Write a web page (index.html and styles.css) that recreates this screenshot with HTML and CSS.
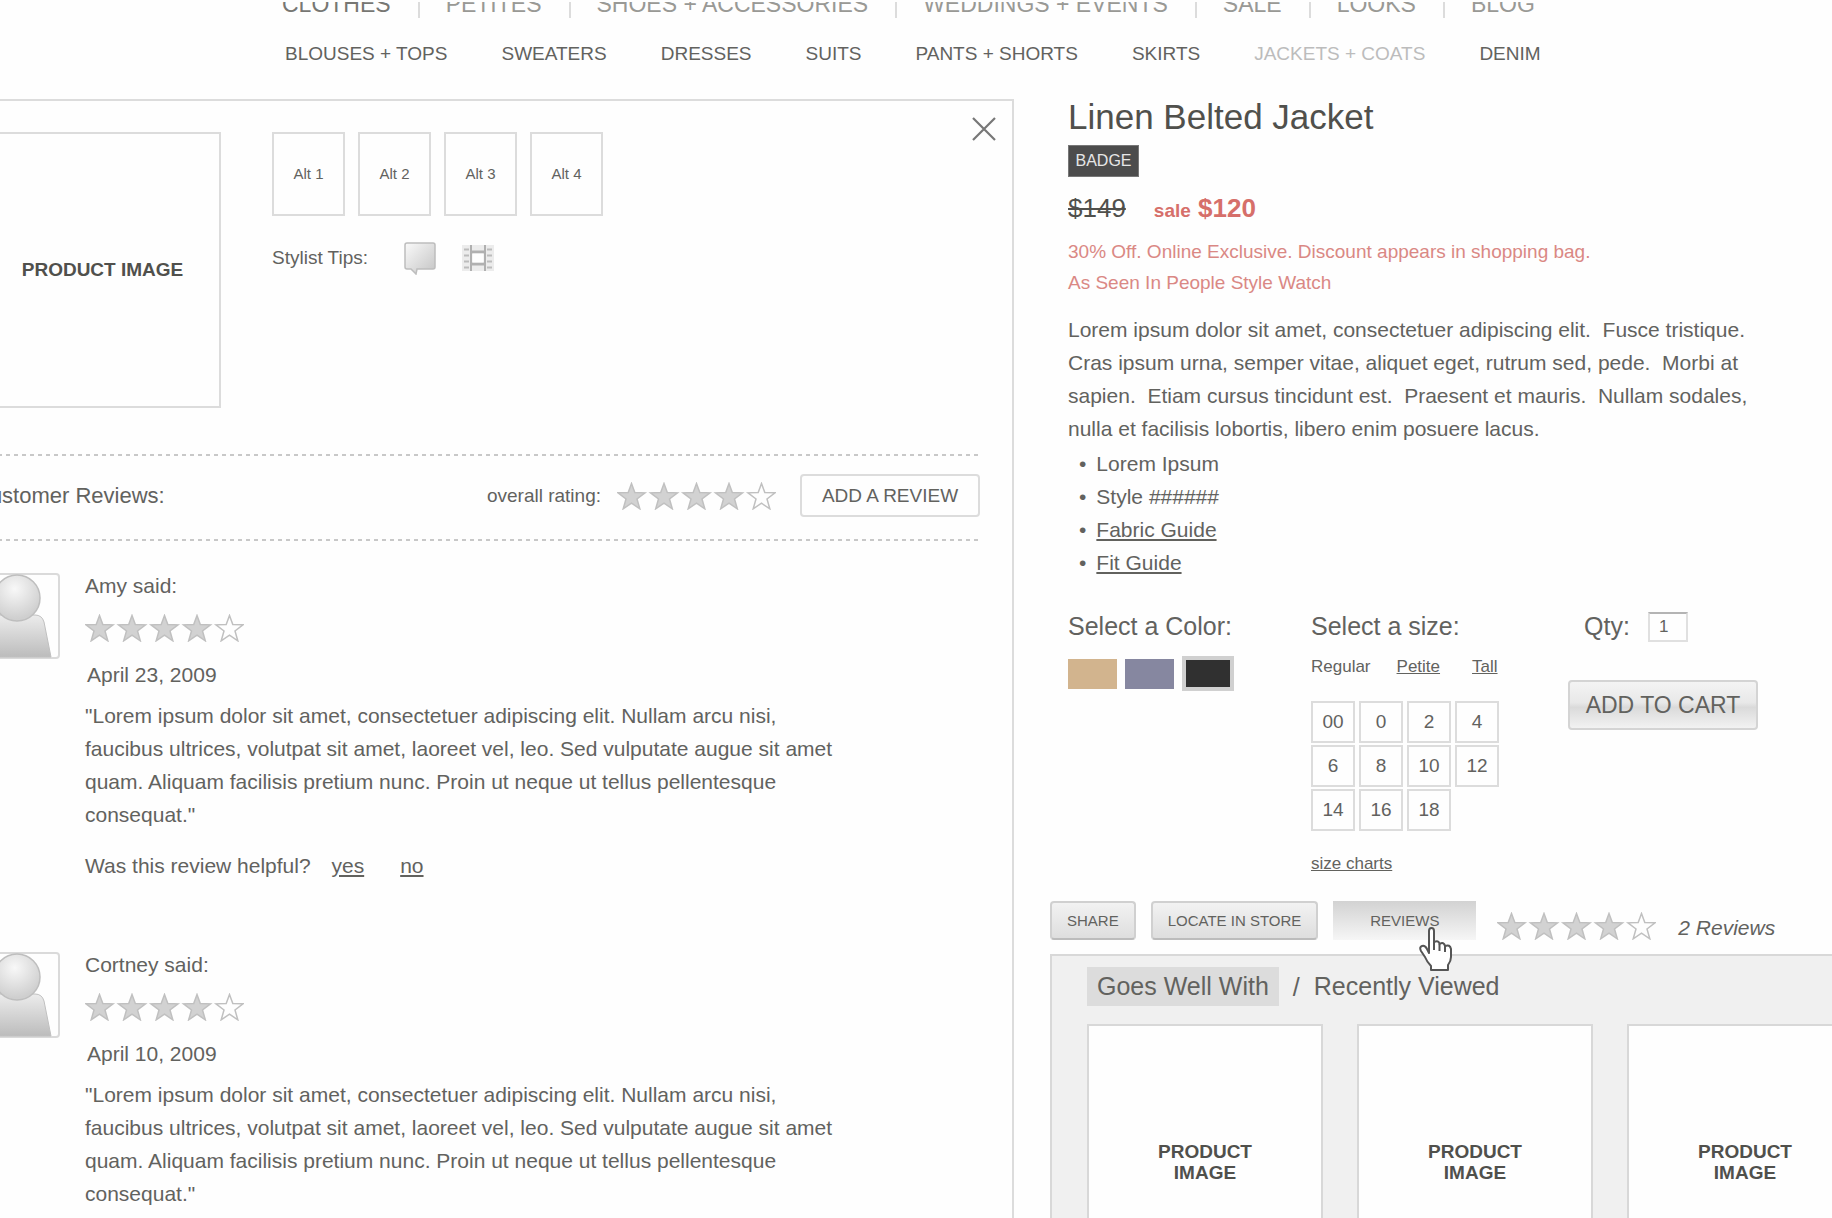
FILE: index.html
```html
<!DOCTYPE html>
<html lang="en">
<head>
    <meta charset="UTF-8">
    <meta name="viewport" content="width=device-width, initial-scale=1.0">
    <title>Linen Belted Jacket</title>
    <link rel="stylesheet" href="styles.css">
</head>
<body>
    <!-- shared icons -->
    <svg class="defs" width="0" height="0" aria-hidden="true">
        <defs>
            <linearGradient id="gBody" x1="0" y1="0" x2="0" y2="1">
                <stop offset="0" stop-color="#ececec"/>
                <stop offset="1" stop-color="#bcbcbc"/>
            </linearGradient>
            <radialGradient id="gHead" cx="0.45" cy="0.3" r="0.65">
                <stop offset="0" stop-color="#f8f8f8"/>
                <stop offset="1" stop-color="#cfcfcf"/>
            </radialGradient>
            <linearGradient id="gBubble" x1="0" y1="0" x2="1" y2="1">
                <stop offset="0" stop-color="#fafafa"/>
                <stop offset="1" stop-color="#c4c4c4"/>
            </linearGradient>
            <path id="star" d="M14.5 1.5L17.8 10.4L28 10.8L20 17L22.8 26.8L14.5 21.2L6.2 26.8L9 17L1 10.8L11.2 10.4Z"/>
            <symbol id="stars" viewBox="0 0 159 28">
                <g fill="#d2d2d2" stroke="#c0c0c0" stroke-width="1.5">
                    <use href="#star"/>
                    <use href="#star" x="32.5"/>
                    <use href="#star" x="65"/>
                    <use href="#star" x="97.5"/>
                    <use href="#star" x="130" fill="#fefefe"/>
                </g>
            </symbol>
            <symbol id="avatar" viewBox="0 0 86 86">
                <rect x="1" y="1" width="84" height="84" rx="3" fill="#fefefe" stroke="#dadada" stroke-width="2"/>
                <path d="M9 84L16 49Q18 42 25 42H61Q68 42 70 49L77 84Z" fill="url(#gBody)" stroke="#c0c0c0"/>
                <circle cx="43" cy="25" r="23" fill="url(#gHead)" stroke="#bebebe" stroke-width="1.5"/>
            </symbol>
        </defs>
    </svg>

    <div class="header">
        <ul class="nav">
            <li class="active"><a href="#">CLOTHES</a></li>
            <li><a href="#">PETITES</a></li>
            <li><a href="#">SHOES + ACCESSORIES</a></li>
            <li><a href="#">WEDDINGS + EVENTS</a></li>
            <li><a href="#">SALE</a></li>
            <li><a href="#">LOOKS</a></li>
            <li><a href="#">BLOG</a></li>
        </ul>
        <ul class="subNav">
            <li><a href="#">BLOUSES + TOPS</a></li>
            <li><a href="#">SWEATERS</a></li>
            <li><a href="#">DRESSES</a></li>
            <li><a href="#">SUITS</a></li>
            <li><a href="#">PANTS + SHORTS</a></li>
            <li><a href="#">SKIRTS</a></li>
            <li class="current"><a href="#">JACKETS + COATS</a></li>
            <li><a href="#">DENIM</a></li>
        </ul>
    </div>

    <div class="main">
        <div class="panel">
            <button class="close" aria-label="Close">
                <svg width="26" height="26" viewBox="0 0 26 26" fill="none" stroke="#777" stroke-width="2.2"><path d="M2 2L24 24M24 2L2 24"/></svg>
            </button>
            <div class="media">
                <div class="mainImage">PRODUCT IMAGE</div>
                <div class="mediaSide">
                    <div class="alts">
                        <button class="alt">Alt 1</button>
                        <button class="alt">Alt 2</button>
                        <button class="alt">Alt 3</button>
                        <button class="alt">Alt 4</button>
                    </div>
                    <div class="tips">
                        <span>Stylist Tips:</span>
                        <svg width="34" height="34" viewBox="0 0 34 34">
                            <path d="M4 2H30Q32 2 32 4V26Q32 28 30 28H14L13 33L8 28H4Q2 28 2 26V4Q2 2 4 2Z" fill="url(#gBubble)" stroke="#bdbdbd" stroke-width="1.5"/>
                        </svg>
                        <svg width="32" height="26" viewBox="0 0 32 26">
                            <rect width="32" height="26" fill="#ececec"/>
                            <path d="M9 0V26M23 0V26" stroke="#b0b0b0" stroke-width="2"/>
                            <path d="M9 7H23M9 19H23" stroke="#b0b0b0" stroke-width="3"/>
                            <rect x="10.5" y="8.5" width="11" height="9" fill="#fefefe"/>
                            <path d="M2 4.5H7M2 10.5H7M2 16.5H7M2 22.5H7M25 4.5H30M25 10.5H30M25 16.5H30M25 22.5H30" stroke="#bcbcbc" stroke-width="2"/>
                        </svg>
                    </div>
                </div>
            </div>

            <div class="reviewsHead">
                <h2>Customer Reviews:</h2>
                <span class="overall">overall rating:</span>
                <svg class="stars" role="img" aria-label="4 of 5 stars"><use href="#stars"/></svg>
                <button class="addReview">ADD A REVIEW</button>
            </div>

            <div class="review">
                <svg class="avatar"><use href="#avatar"/></svg>
                <div class="reviewBody">
                    <div class="author">Amy said:</div>
                    <svg class="stars" role="img" aria-label="4 of 5 stars"><use href="#stars"/></svg>
                    <div class="date">April 23, 2009</div>
                    <p>"Lorem ipsum dolor sit amet, consectetuer adipiscing elit. Nullam arcu nisi, faucibus ultrices, volutpat sit amet, laoreet vel, leo. Sed vulputate augue sit amet quam. Aliquam facilisis pretium nunc. Proin ut neque ut tellus pellentesque consequat."</p>
                    <div class="helpful">Was this review helpful? <a href="#">yes</a><a href="#">no</a></div>
                </div>
            </div>
            <div class="review">
                <svg class="avatar"><use href="#avatar"/></svg>
                <div class="reviewBody">
                    <div class="author">Cortney said:</div>
                    <svg class="stars" role="img" aria-label="4 of 5 stars"><use href="#stars"/></svg>
                    <div class="date">April 10, 2009</div>
                    <p>"Lorem ipsum dolor sit amet, consectetuer adipiscing elit. Nullam arcu nisi, faucibus ultrices, volutpat sit amet, laoreet vel, leo. Sed vulputate augue sit amet quam. Aliquam facilisis pretium nunc. Proin ut neque ut tellus pellentesque consequat."</p>
                </div>
            </div>
        </div>

        <div class="side">
            <div class="info">
                <h1>Linen Belted Jacket</h1>
                <span class="badge">BADGE</span>
                <div class="price"><del>$149</del><span class="sale">sale</span> <strong>$120</strong></div>
                <div class="promo">30% Off. Online Exclusive. Discount appears in shopping bag.<br>As Seen In People Style Watch</div>
                <p class="desc">Lorem ipsum dolor sit amet, consectetuer adipiscing elit.&nbsp; Fusce tristique. Cras ipsum urna, semper vitae, aliquet eget, rutrum sed, pede.&nbsp; Morbi at sapien.&nbsp; Etiam cursus tincidunt est.&nbsp; Praesent et mauris.&nbsp; Nullam sodales, nulla et facilisis lobortis, libero enim posuere lacus.</p>
                <ul class="details">
                    <li>Lorem Ipsum</li>
                    <li>Style ######</li>
                    <li><a href="#">Fabric Guide</a></li>
                    <li><a href="#">Fit Guide</a></li>
                </ul>

                <div class="options">
                    <div>
                        <h3>Select a Color:</h3>
                        <div class="swatches">
                            <input type="radio" name="color" class="swatch tan" aria-label="Tan">
                            <input type="radio" name="color" class="swatch blue" aria-label="Blue">
                            <input type="radio" name="color" class="swatch black" aria-label="Black" checked>
                        </div>
                    </div>
                    <div>
                        <h3>Select a size:</h3>
                        <div class="fits"><span>Regular</span><a href="#">Petite</a><a href="#">Tall</a></div>
                        <div class="sizes">
                            <button>00</button>
                            <button>0</button>
                            <button>2</button>
                            <button>4</button>
                            <button>6</button>
                            <button>8</button>
                            <button>10</button>
                            <button>12</button>
                            <button>14</button>
                            <button>16</button>
                            <button>18</button>
                        </div>
                        <a class="charts" href="#">size charts</a>
                    </div>
                    <div>
                        <div class="qty">
                            <label for="qty">Qty:</label>
                            <input type="text" id="qty" value="1">
                        </div>
                        <button class="addCart">ADD TO CART</button>
                    </div>
                </div>
            </div>

            <div class="actions">
                <button class="btn">SHARE</button>
                <button class="btn">LOCATE IN STORE</button>
                <button class="btn btnOn">REVIEWS
                    <svg class="pointer" width="34" height="44" viewBox="0 0 34 44" aria-hidden="true">
                        <path d="M10 26V4Q10 1 12.5 1Q15 1 15 4V15Q20 13 20.5 17Q25 14.5 26 19Q31 17 32 22V30Q32 34 29 38V43H12V39Q8 35 6 30L2 24Q0 20 3 19Q6 18 8 22Z" fill="#fff" stroke="#555" stroke-width="2" stroke-linejoin="round"/>
                        <path d="M15 14V23M20.5 17V24M26 19V25" stroke="#555" stroke-width="2"/>
                    </svg>
                </button>
                <svg class="stars" role="img" aria-label="4 of 5 stars"><use href="#stars"/></svg>
                <em>2 Reviews</em>
            </div>

            <div class="related">
                <div class="tabs">
                    <button class="tab tabOn">Goes Well With</button>
                    <span>/</span>
                    <button class="tab">Recently Viewed</button>
                </div>
                <div class="cards">
                    <div class="card">PRODUCT<br>IMAGE</div>
                    <div class="card">PRODUCT<br>IMAGE</div>
                    <div class="card">PRODUCT<br>IMAGE</div>
                </div>
            </div>
        </div>
    </div>
</body>
</html>
```
FILE: styles.css
```css
*{padding: 0;margin: 0;list-style: none;box-sizing: border-box;}
body{height: 100vh;overflow: hidden;background: #fefefe;color: #62625e;font: 21px/24px "Liberation Sans", Arial, sans-serif;}
a{color: inherit;}
button, input{font: inherit;color: inherit;}
button{cursor: pointer;}
svg{display: block;flex: none;}
h1, h2, h3{font-weight: normal;}
.defs{position: absolute;}

/* header */
.header{margin-top: 2px;overflow: hidden;}
.header a{text-decoration: none;}
.nav{display: flex;margin-top: -10px;padding-left: 282px;height: 26px;font-size: 23px;color: #999995;}
.nav li{padding-right: 27px;}
.nav li + li{padding-left: 26px;border-left: 2px solid #dcdcdc;}
.nav .active{color: #777773;}
.subNav{display: flex;gap: 54px;margin-top: 24px;padding-left: 285px;font-size: 19px;}
.subNav .current{color: #bcbcbc;}

.main{display: grid;grid-template-columns: minmax(0, 1074fr) minmax(0, 782fr);gap: 36px;margin: 33px 0 0 -60px;}

/* left panel */
.panel{position: relative;border: 2px solid #dcdcdc;padding: 31px 32px 0;}
.close{position: absolute;top: 15px;right: 15px;background: none;border: 0;}
.media{display: flex;gap: 51px;margin-left: 10px;}
.mainImage{width: 237px;height: 276px;border: 2px solid #dcdcdc;display: flex;align-items: center;justify-content: center;font-size: 19px;font-weight: bold;color: #50504c;}
.alts{display: flex;gap: 13px;}
.alt{width: 73px;height: 84px;background: none;border: 2px solid #dcdcdc;font-size: 15px;}
.tips{display: flex;align-items: center;gap: 25px;margin-top: 25px;font-size: 19px;}
.tips span{margin-right: 10px;}
.stars{width: 159px;height: 28px;}

.reviewsHead{position: relative;display: flex;align-items: center;height: 87px;margin-top: 46px;padding-bottom: 4px;}
.reviewsHead::before, .reviewsHead::after{content: "";position: absolute;left: 0;right: 0;height: 2px;background: repeating-linear-gradient(90deg, #c8c8c8 0 4px, transparent 4px 8px);}
.reviewsHead::before{top: 0;}
.reviewsHead::after{bottom: 0;}
.reviewsHead h2{flex: 1;font-size: 22px;}
.overall{font-size: 19px;margin-right: 16px;}
.addReview{width: 180px;height: 43px;margin-left: 24px;background: none;border: 2px solid #dcdcdc;border-radius: 4px;font-size: 19px;}

.review{display: flex;gap: 25px;margin: 32px 0 74px;}
.avatar{width: 86px;height: 86px;}
.reviewBody{padding-top: 1px;max-width: 760px;}
.reviewBody .stars{margin: 16px 0 21px;}
.date{padding-left: 2px;}
.reviewBody p{margin: 12px 0 23px;line-height: 33px;}
.helpful a{margin-left: 15px;}
.helpful a + a{margin-left: 36px;}

/* right column */
.info{padding-left: 18px;}
h1{font-size: 35px;line-height: 36px;color: #50504c;}
.badge{display: block;width: 71px;height: 32px;margin-top: 10px;background: #4c4c4c;border: 1px solid #777;color: #e6e6e6;font-size: 16px;line-height: 30px;text-align: center;}
.price{margin-top: 16px;font-size: 26px;line-height: 30px;color: #50504c;}
.price .sale{margin-left: 28px;font-size: 19px;line-height: 20px;font-weight: bold;}
.price .sale, .price strong{color: #d66f6a;}
.promo{margin-top: 13px;font-size: 19px;line-height: 31px;color: #da8884;}
.desc{max-width: 700px;margin-top: 15px;line-height: 33px;}
.details{margin-top: 2px;line-height: 33px;}
.details li{display: flex;gap: 10px;padding-left: 11px;}
.details li::before{content: "•";}

.options{display: grid;grid-template-columns: 243px 257px 1fr;margin-top: 33px;}
.options h3, .qty{font-size: 25px;line-height: 28px;}
.swatches{display: flex;align-items: center;gap: 8px;margin-top: 16px;}
.swatch{appearance: none;width: 49px;height: 30px;cursor: pointer;}
.swatch:checked{width: 52px;height: 35px;border: 4px solid #d0d0d0;}
.tan{background: #d2b48e;}
.blue{background: #8687a0;}
.black{background: #303030;}
.fits{display: flex;gap: 26px;margin-top: 17px;font-size: 17px;line-height: 20px;}
.fits a + a{margin-left: 6px;}
.sizes{display: grid;grid-template-columns: repeat(4, 44px);gap: 2px 4px;margin: 24px 0 23px;}
.sizes button{height: 42px;background: none;border: 2px solid #dcdcdc;font-size: 19px;}
.charts{display: block;font-size: 17px;line-height: 20px;}
.qty{display: flex;gap: 18px;padding-left: 16px;}
.qty input{width: 40px;height: 30px;border: 2px solid #e0e0e0;border-top-color: #b4b4b4;background: #fefefe;font-size: 17px;text-align: center;padding-right: 8px;}
.addCart{width: 190px;height: 50px;margin-top: 38px;border: 2px solid #d4d4d4;border-radius: 4px;background: linear-gradient(#f4f4f4, #e8e8e8 45%, #dadada 55%, #f2f2f2);font-size: 23px;}

.actions{display: flex;align-items: flex-end;margin-top: 27px;}
.btn{height: 39px;margin-right: 15px;padding: 0 15px;border: 2px solid #d0d0d0;border-bottom-color: #bcbcbc;border-radius: 4px;background: linear-gradient(#f2f2f2, #dedede);font-size: 15px;}
.btnOn{position: relative;width: 143px;margin-right: 21px;border: 0;border-radius: 0;background: linear-gradient(#d2d2d2, #f6f6f6);}
.pointer{position: absolute;left: 86px;top: 26px;z-index: 1;}
.actions em{margin-left: 22px;}

.related{margin-top: 14px;padding: 11px 0 30px 35px;border: 2px solid #d8d8d8;border-right: 0;background: #f0f0f0;overflow: hidden;}
.tabs{display: flex;align-items: center;font-size: 25px;}
.tabs span{margin: 0 14px;}
.tab{border: 0;background: none;line-height: 39px;}
.tabOn{background: #dcdcdc;padding: 0 10px;}
.cards{display: flex;gap: 34px;margin-top: 18px;}
.card{flex: none;width: 236px;height: 276px;background: #fefefe;border: 2px solid #d8d8d8;display: flex;align-items: center;justify-content: center;text-align: center;font-size: 19px;line-height: 21px;font-weight: bold;color: #50504c;}
```
